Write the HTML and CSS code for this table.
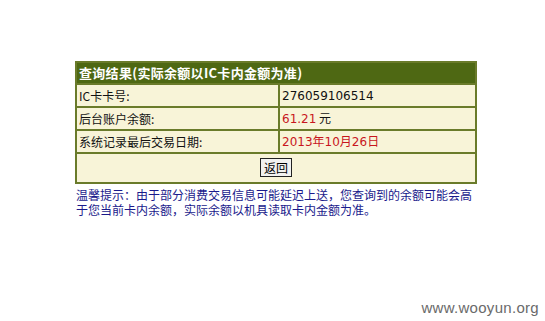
FILE: index.html
```html
<!DOCTYPE html>
<html lang="zh-CN">
<head>
<meta charset="utf-8">
<title>查询结果</title>
<link rel="stylesheet" href="styles.css">
</head>
<body>
<div class="page">
  <table class="result">
    <tr><th colspan="2" class="head">查询结果(实际余额以IC卡内金额为准)</th></tr>
    <tr><td class="lab">IC卡卡号:</td><td class="val"><span class="num">276059106514</span></td></tr>
    <tr><td class="lab">后台账户余额:</td><td class="val"><span class="num red">61.21</span> 元</td></tr>
    <tr><td class="lab">系统记录最后交易日期:</td><td class="val red"><span class="num">2013</span>年<span class="num">10</span>月<span class="num">26</span>日</td></tr>
    <tr><td colspan="2" class="btnrow"><button class="back">返回</button></td></tr>
  </table>
  <p class="tip">温馨提示：由于部分消费交易信息可能延迟上送，您查询到的余额可能会高于您当前卡内余额，实际余额以机具读取卡内金额为准。</p>
</div>
<div class="mark">www.wooyun.org</div>
</body>
</html>
```
FILE: styles.css
```css
html, body {
  margin: 0;
  padding: 0;
  background: #ffffff;
}
body {
  width: 545px;
  height: 321px;
  position: relative;
  overflow: hidden;
  font-family: "Noto Sans CJK SC", "DejaVu Sans", sans-serif;
  font-size: 12px;
}
.page {
  padding: 61px 0 0 75px;
}
.result {
  width: 402px;
  border-collapse: collapse;
  border: 2px solid #6a7b2a;
  background: #f8f4d8;
}
.result th, .result td {
  border: 2px solid #6a7b2a;
  padding: 0 2px;
  height: 20px;
  line-height: 20px;
  text-align: left;
  color: #111;
  font-weight: normal;
}
.result th.head {
  background: #4e6813;
  color: #ffffff;
  font-weight: bold;
  font-size: 13px;
  letter-spacing: 0.3px;
}
.result td.lab {
  width: 197px;
}
.num {
  font-family: "DejaVu Sans", sans-serif;
  font-size: 12px;
}
.red {
  color: #c8161d;
}
.result td.red {
  color: #c8161d;
}
.result td.btnrow {
  height: 28px;
  text-align: center;
}
.back {
  font-family: "Noto Sans CJK SC", sans-serif;
  font-size: 12px;
  line-height: 15px;
  padding: 1px 3px;
  border: 1px solid #222;
  background: #f2f2f0;
  color: #000;
  margin: 0;
}
.tip {
  width: 404px;
  margin: 3px 0 0 1px;
  color: #1a1a8c;
  line-height: 15px;
  font-size: 12px;
}
.mark {
  position: absolute;
  right: 6px;
  bottom: 5px;
  font-family: "Liberation Sans", Arial, sans-serif;
  font-size: 15px;
  color: #6a6a6a;
  letter-spacing: 0.3px;
}
```
